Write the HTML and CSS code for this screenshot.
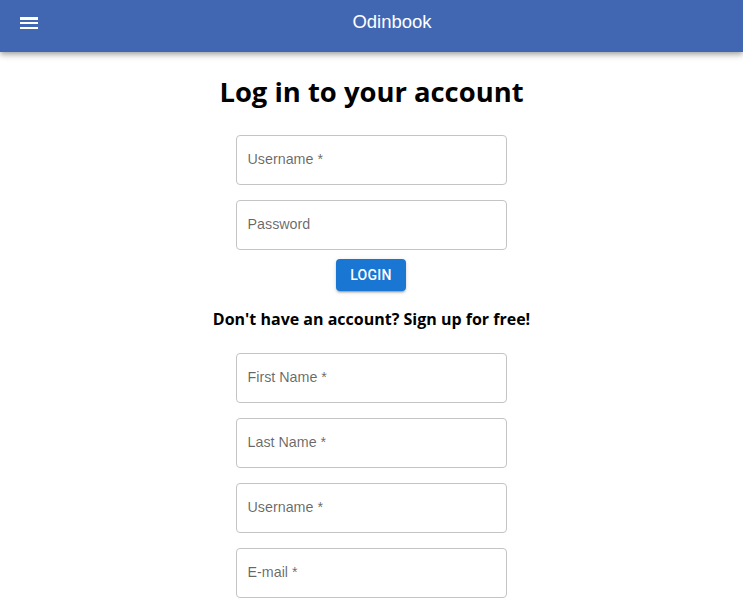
FILE: index.html
```html
<!DOCTYPE html>
<html>
<head>
<meta charset="utf-8">
<link rel="stylesheet" href="styles.css">
</head>
<body>
<header class="appbar">
  <button class="menu-btn" aria-label="menu">
    <svg viewBox="0 0 24 24" width="24" height="24"><path fill="#fff" d="M3 18h18v-2H3v2zm0-5h18v-2H3v2zm0-6v2h18V6H3z"/></svg>
  </button>
  <div class="title">Odinbook</div>
</header>
<main class="page">
  <h1 class="heading">Log in to your account</h1>
  <form class="form">
    <div class="field"><span class="label">Username *</span></div>
    <div class="field"><span class="label">Password</span></div>
    <button type="button" class="login">LOGIN</button>
  </form>
  <h2 class="subheading">Don't have an account? Sign up for free!</h2>
  <form class="form signup">
    <div class="field"><span class="label">First Name *</span></div>
    <div class="field"><span class="label">Last Name *</span></div>
    <div class="field"><span class="label">Username *</span></div>
    <div class="field"><span class="label">E-mail *</span></div>
  </form>
</main>
</body>
</html>
```

FILE: styles.css
```css
html, body {
  margin: 0;
  padding: 0;
  background: #fff;
}
body {
  font-family: "Liberation Sans", Arial, sans-serif;
  overflow: hidden;
  height: 607px;
}
.appbar {
  height: 52px;
  background: #4267b2;
  display: flex;
  align-items: center;
  box-shadow: 0 2px 4px -1px rgba(0,0,0,0.2), 0 4px 5px 0 rgba(0,0,0,0.14), 0 1px 10px 0 rgba(0,0,0,0.12);
  position: relative;
  z-index: 1;
}
.menu-btn {
  background: none;
  border: 0;
  padding: 0;
  margin-left: 17px;
  width: 24px;
  height: 24px;
  display: flex;
  margin-top: -7px;
}
.title {
  flex: 1;
  text-align: center;
  color: #fff;
  font-size: 18.5px;
  margin-top: -8px;
}
.page {
  display: flex;
  flex-direction: column;
  align-items: center;
}
.heading {
  font-family: "Open Sans", sans-serif;
  font-weight: 700;
  font-size: 27.4px;
  margin: 16px 0 0;
  line-height: 48px;
  color: #000;
}
.form {
  display: flex;
  flex-direction: column;
  align-items: center;
  gap: 15px;
  margin-top: 19px;
}
.field {
  width: 258px;
  height: 48px;
  border: 1px solid #c4c4c4;
  border-radius: 4px;
  display: flex;
  align-items: center;
  padding-left: 11px;
  box-sizing: content-box;
  margin-right: 1px;
}
.label {
  font-size: 14.3px;
  color: rgba(0,0,0,0.6);
  margin-top: -2px;
}
.login {
  margin-top: -6px;
  margin-left: -1px;
  height: 32px;
  padding: 0 14px;
  background: #1976d2;
  color: #fff;
  border: 0;
  border-radius: 4px;
  font-family: Roboto, sans-serif;
  font-weight: 500;
  font-size: 14px;
  letter-spacing: 0.3px;
  box-shadow: 0 3px 1px -2px rgba(0,0,0,0.2), 0 2px 2px 0 rgba(0,0,0,0.14), 0 1px 5px 0 rgba(0,0,0,0.12);
}
.subheading {
  font-family: "Open Sans", sans-serif;
  font-weight: 700;
  font-size: 16px;
  margin: 17px 0 0;
  line-height: 22px;
  color: #000;
}
.signup {
  margin-top: 23px;
}
```
